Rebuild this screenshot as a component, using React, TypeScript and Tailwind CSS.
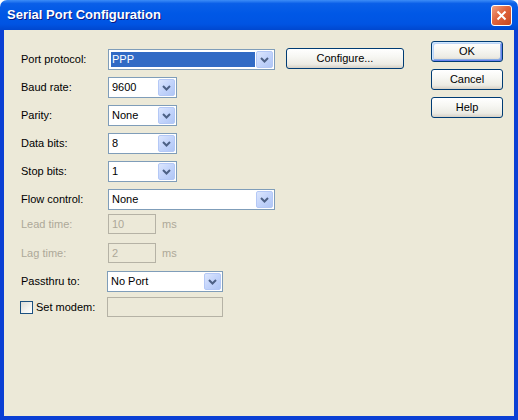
import type { ReactNode } from "react"

const font = { fontFamily: '"Liberation Sans", Arial, sans-serif' }

function Arrow() {
  return (
    <div className="flex h-full w-[17px] items-center justify-center rounded-[2px] border border-[#B4C8F6] bg-[linear-gradient(135deg,#DCE6FD_0%,#C3D4FB_50%,#B0C6F5_100%)]">
      <svg width="9" height="6" viewBox="0 0 9 6">
        <path d="M1 1 L4.5 4.5 L8 1" fill="none" stroke="#4D6185" strokeWidth="2" />
      </svg>
    </div>
  )
}

function Combo({ value, width, selected }: { value: string; width: string; selected?: boolean }) {
  return (
    <div className={"flex h-[21px] border border-[#7F9DB9] bg-white p-[1px] " + width}>
      <div className="flex flex-1 p-[1px]">
        <div
          className={
            selected
              ? "flex flex-1 items-center bg-[#316AC5] pl-[1px] text-white"
              : "flex flex-1 items-center pl-[1px] text-black"
          }
        >
          {value}
        </div>
      </div>
      <Arrow />
    </div>
  )
}

function Disabled({ value, width }: { value?: string; width: string }) {
  return (
    <div className={"flex h-[20px] items-center border border-[#B5B2A5] bg-[#ECE9D8] pl-[3px] text-[#ACA899] " + width}>
      {value}
    </div>
  )
}

function Row({ label, children, disabled, className }: { label: string; children: ReactNode; disabled?: boolean; className?: string }) {
  return (
    <div className={"flex items-center " + (className ?? "")}>
      <div className={disabled ? "w-[87px] text-[#ACA899]" : "w-[87px] text-black"}>{label}</div>
      {children}
    </div>
  )
}

function XPButton({ children, def, className }: { children: ReactNode; def?: boolean; className?: string }) {
  return (
    <div
      className={
        "flex h-[21px] items-center justify-center rounded-[3px] border border-[#003C74] bg-[linear-gradient(#FFFFFF_0%,#F7F7F3_40%,#ECEBE4_80%,#D6D0C5_100%)] text-black " +
        (def
          ? "shadow-[inset_1px_1px_0_#CEE7FF,inset_-1px_-1px_0_#6982EE,inset_2px_2px_0_#BCD4F6,inset_-2px_-2px_0_#89ADE4] "
          : "") +
        (className ?? "")
      }
    >
      {children}
    </div>
  )
}

export default function App() {
  return (
    <div className="flex h-[420px] w-[518px] flex-col text-[11px]" style={font}>
      <div className="flex h-[30px] items-center justify-between rounded-t-[7px] bg-[linear-gradient(#3D8DF7_0%,#0A5FE8_12%,#0058E6_45%,#0054E3_80%,#0047CF_100%)] pl-[7px] pr-[6px]">
        <span className="text-[13px] font-bold text-white [text-shadow:1px_1px_0_#0A1883]">
          Serial Port Configuration
        </span>
        <div className="flex h-[21px] w-[21px] items-center justify-center rounded-[3px] border border-white bg-[linear-gradient(135deg,#F0A283_0%,#E0643D_45%,#C9461F_100%)]">
          <svg width="11" height="11" viewBox="0 0 11 11">
            <path d="M1.5 1.5 L9.5 9.5 M9.5 1.5 L1.5 9.5" stroke="white" strokeWidth="2" />
          </svg>
        </div>
      </div>
      <div className="flex flex-1 items-start border-x-4 border-b-4 border-[#0A3FD4] bg-[#ECE9D8] pl-[17px]">
        <div className="flex flex-col pt-[19px]">
          <Row label="Port protocol:">
            <Combo value="PPP" width="w-[167px]" selected />
          </Row>
          <Row label="Baud rate:" className="mt-[7px]">
            <Combo value="9600" width="w-[69px]" />
          </Row>
          <Row label="Parity:" className="mt-[7px]">
            <Combo value="None" width="w-[69px]" />
          </Row>
          <Row label="Data bits:" className="mt-[7px]">
            <Combo value="8" width="w-[69px]" />
          </Row>
          <Row label="Stop bits:" className="mt-[7px]">
            <Combo value="1" width="w-[69px]" />
          </Row>
          <Row label="Flow control:" className="mt-[7px]">
            <Combo value="None" width="w-[167px]" />
          </Row>
          <Row label="Lead time:" disabled className="mt-[4px]">
            <Disabled value="10" width="w-[48px]" />
            <span className="ml-[6px] text-[#ACA899]">ms</span>
          </Row>
          <Row label="Lag time:" disabled className="mt-[9px]">
            <Disabled value="2" width="w-[48px]" />
            <span className="ml-[6px] text-[#ACA899]">ms</span>
          </Row>
          <Row label="Passthru to:" className="mt-[8px]">
            <div className="-ml-[1px]">
              <Combo value="No Port" width="w-[116px]" />
            </div>
          </Row>
          <div className="mt-[5px] flex items-center">
            <div className="-ml-[1px] h-[13px] w-[13px] border border-[#1C5180] bg-[linear-gradient(135deg,#DCDCD7_0%,#F4F4F0_60%,#FFFFFF_100%)]" />
            <span className="ml-[3px] w-[71px] text-black">Set modem:</span>
            <Disabled width="w-[116px]" />
          </div>
        </div>
        <XPButton className="ml-[11px] mt-[18px] w-[118px]">Configure...</XPButton>
        <div className="ml-[27px] mt-[11px] flex flex-col gap-[7px]">
          <XPButton def className="w-[72px]">OK</XPButton>
          <XPButton className="w-[72px]">Cancel</XPButton>
          <XPButton className="w-[72px]">Help</XPButton>
        </div>
      </div>
    </div>
  )
}
